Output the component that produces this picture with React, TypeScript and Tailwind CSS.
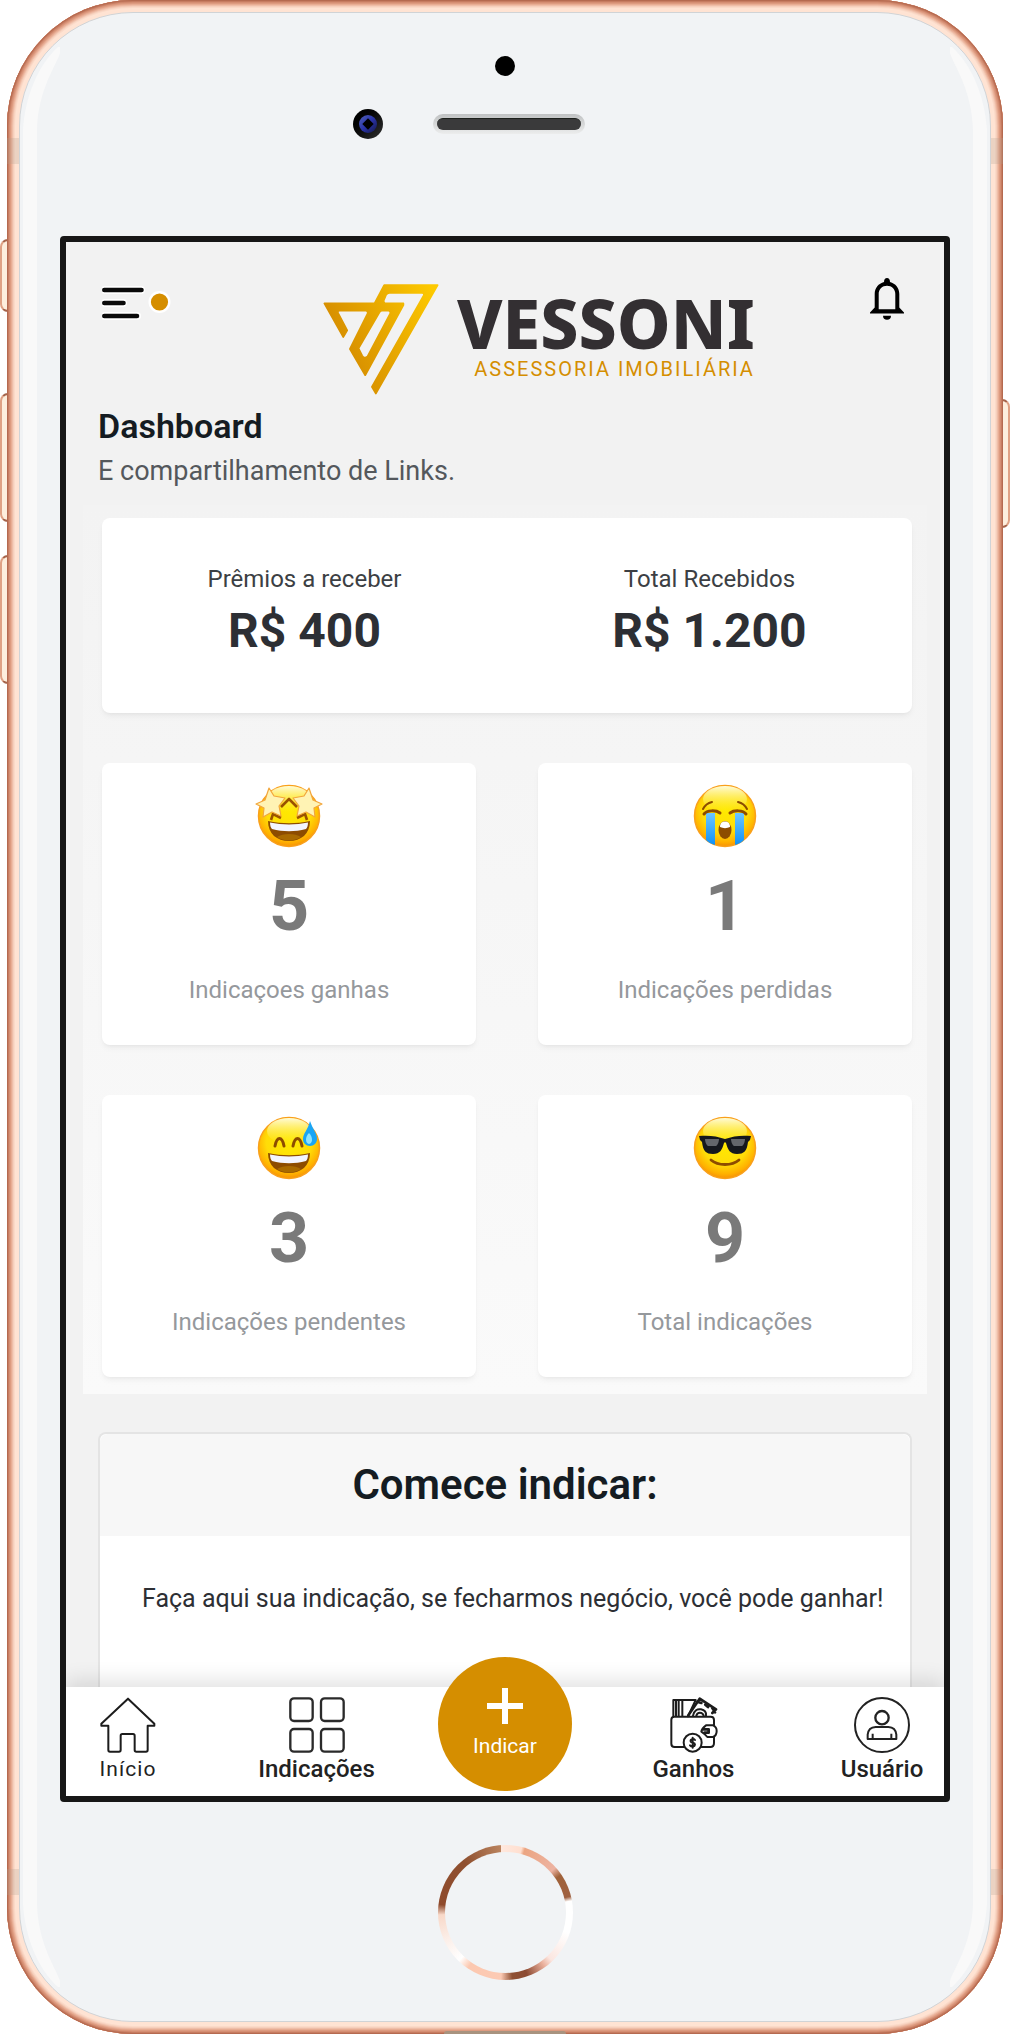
import React from "react";

const GlassEdge = () => (
  <>
    <svg className="block w-[38px] h-[83px]" viewBox="0 0 38 83">
      <path d="M37 0 L37 6 C34 17 15 42 14 83 L0 83 C2 50 15 18 35 0 Z" fill="#f9f9f9" />
    </svg>
    <div className="flex-1 w-[14px] bg-[#f9f9f9]" />
    <svg className="block w-[38px] h-[83px] -scale-y-100" viewBox="0 0 38 83">
      <path d="M37 0 L37 6 C34 17 15 42 14 83 L0 83 C2 50 15 18 35 0 Z" fill="#f9f9f9" />
    </svg>
  </>
);

const MenuIcon = () => (
  <svg className="block w-[72px] h-[34px]" viewBox="0 0 72 34">
    <g stroke="#fff" strokeWidth="8" strokeLinecap="round">
      <path d="M3 4H39M3 17H21M3 30H35" />
    </g>
    <g stroke="#0a0a0a" strokeWidth="4.6" strokeLinecap="round">
      <path d="M2.300 4H39.500M2.300 17H21.500M2.300 30H35" />
    </g>
    <circle cx="57.500" cy="16" r="11" fill="#fff" />
    <circle cx="57.500" cy="16" r="8.600" fill="#d58e00" />
  </svg>
);

const BellIcon = () => (
  <svg className="block w-[34px] h-[42px]" viewBox="0 0 34 42">
    <path
      d="M17 0C18.800 0 20 1.600 20 4C25.500 5.500 29.300 10 29.300 16V29.500L34 34.500V35.500H0V34.500L4.700 29.500V16C4.700 10 8.500 5.500 14 4C14 1.600 15.200 0 17 0Z M17 7.800C12.300 7.800 8.700 11.300 8.700 16V31.200H25.300V16C25.300 11.300 21.700 7.800 17 7.800Z"
      fill="#000"
      fillRule="evenodd"
    />
    <path d="M13 37.800H21C21 40.200 19.500 41.800 17 41.800C14.500 41.800 13 40.200 13 37.800Z" fill="#000" />
  </svg>
);

const LogoMark = () => (
  <svg className="block shrink-0 w-[116px] h-[111px]" viewBox="788 161 349 333">
    <defs>
      <linearGradient id="gold" gradientUnits="userSpaceOnUse" x1="800" y1="330" x2="1120" y2="180">
        <stop offset="0" stopColor="#d38900" />
        <stop offset="1" stopColor="#fdc900" />
      </linearGradient>
    </defs>
    <g fill="url(#gold)" stroke="url(#gold)" strokeWidth="5" strokeLinejoin="round" fillRule="evenodd">
      <path d="M792 219H943L972 164H1133L947 490L935 470L1091 195Q1093 187 1086 187H988Q981 187 978 193L970 212L974 219H1030V224L915 435L869 356L922 250Q924 241 917 241H838Q830 241 834 249L861 300L849 320Z M958 246L895 354L906 376Q913 387 922 378L990 250Q992 241 985 241H966Q961 241 958 246Z" />
    </g>
  </svg>
);

const FaceBase = ({ id }: { id: string }) => (
  <>
    <defs>
      <radialGradient id={id} cx="0.5" cy="0.4" r="0.62">
        <stop offset="0" stopColor="#ffea00" />
        <stop offset="0.6" stopColor="#ffdc08" />
        <stop offset="0.85" stopColor="#ffb000" />
        <stop offset="1" stopColor="#f48a08" />
      </radialGradient>
      <linearGradient id={id + "-shine"} x1="0" y1="0" x2="0" y2="1">
        <stop offset="0" stopColor="#fffbd8" />
        <stop offset="1" stopColor="#fff04a" stopOpacity="0" />
      </linearGradient>
    </defs>
    <circle cx="34" cy="32" r="30.500" fill={"url(#" + id + ")"} stroke="#f9a01c" strokeWidth="1.500" />
    <ellipse cx="34" cy="15" rx="22" ry="13" fill={"url(#" + id + "-shine)"} />
  </>
);

const Grin = () => (
  <>
    <path d="M13 37C27 40 41 40 55 37C55 50 46 57 34 57C22 57 13 50 13 37Z" fill="#8d4c00" />
    <path d="M15 38.500C27 41 41 41 53 38.500C53 42 52 44 51 45C40 48 28 48 17 45C16 44 15 42 15 38.500Z" fill="#f3f5ff" />
    <path d="M22 53C28 49 40 49 46 53C40 57.500 28 57.500 22 53Z" fill="#a96a00" />
  </>
);

const StarStruck = () => (
  <svg className="block w-[68px] h-[64px]" viewBox="0 0 68 64">
    <FaceBase id="face-star" />
    <g stroke="#9a5200" strokeWidth="2.600" strokeLinejoin="round" fill="none">
      <path d="M26 23L34 15L42 23M16 36L18 30L26 34M52 36L50 30L42 34" />
    </g>
    <g fill="#fff3b4" stroke="#f2a63c" strokeWidth="1.200" strokeLinejoin="round">
      <path d="M14 4L19 12L30 14L24 22L26 32L17 28L8 33L9 24L1 20L10 16Z" />
      <path d="M54 4L49 12L38 14L44 22L42 32L51 28L60 33L59 24L67 20L58 16Z" />
    </g>
    <Grin />
  </svg>
);

const Crying = () => (
  <svg className="block w-[68px] h-[64px]" viewBox="0 0 68 64">
    <FaceBase id="face-cry" />
    <defs>
      <linearGradient id="tears" x1="0" y1="0" x2="0" y2="1">
        <stop offset="0" stopColor="#6cc6ff" />
        <stop offset="1" stopColor="#1090f5" />
      </linearGradient>
    </defs>
    <path d="M15 29H24V61C20 60 17 58 15 56Z M44 29H53V56C51 58 48 60 44 61Z" fill="url(#tears)" />
    <g stroke="#8d4c00" strokeWidth="3" strokeLinecap="round" fill="none">
      <path d="M13 30C16 26 25 26 29 29M55 30C52 26 43 26 39 29" />
      <path d="M12 25C14 21 17 19 21 18M56 25C54 21 51 19 47 18" strokeWidth="2" />
    </g>
    <ellipse cx="34" cy="46" rx="6.500" ry="9" fill="#8d4c00" />
    <path d="M29 43C29 39 31 37.500 34 37.500C37 37.500 39 39 39 43C36 44.500 32 44.500 29 43Z" fill="#fff" />
  </svg>
);

const SweatSmile = () => (
  <svg className="block w-[68px] h-[64px]" viewBox="0 0 68 64">
    <FaceBase id="face-sweat" />
    <g stroke="#8d4c00" strokeWidth="3" strokeLinecap="round" fill="none">
      <path d="M20 30C22 20 27 20 29 30M38 30C40 20 45 20 47 30" />
    </g>
    <Grin />
    <path d="M55 5C58 14 62 17 62 23C62 27 59 30 55 30C51 30 48 27 48 23C48 17 53 14 55 5Z" fill="#1aa5f5" />
    <path d="M54 17C58 21 58 27 54 28C50 27 50 21 54 17Z" fill="#8ee4ff" />
  </svg>
);

const Cool = () => (
  <svg className="block w-[68px] h-[64px]" viewBox="0 0 68 64">
    <FaceBase id="face-cool" />
    <path d="M8 20C17 19 26 20 34 23C42 20 51 19 60 20L59 24L57 26C56 35 53 38 46 38C39 38 37 34 35 27C34.500 26 33.500 26 33 27C31 34 29 38 22 38C15 38 12 35 11 26L9 24Z" fill="#15181e" />
    <path d="M14 23H28C28 25 27 29 25 30H17C15 29 14 25 14 23Z M40 23H54C54 25 53 29 51 30H43C41 29 40 25 40 23Z" fill="#63666b" />
    <path d="M20 44C27 50 41 50 48 44" stroke="#8d4c00" strokeWidth="2.800" strokeLinecap="round" fill="none" />
  </svg>
);

const HomeIcon = () => (
  <svg className="block w-[56px] h-[56px]" viewBox="119 172 168 168" fill="none" stroke="#1c1c1c" strokeWidth="6" strokeLinejoin="round">
    <path d="M203 177L282 252V258H262V331Q262 336 257 336H228Q223 336 223 331V288Q223 283 218 283H186Q181 283 181 288V331Q181 336 176 336H149Q144 336 144 331V258H123V252Z" />
  </svg>
);

const GridIcon = () => (
  <svg className="block w-[56px] h-[56px]" viewBox="684 173 168 168" fill="none" stroke="#2a2a2a" strokeWidth="7">
    <rect x="688" y="177" width="67" height="68" rx="11" />
    <rect x="780" y="177" width="68" height="68" rx="11" />
    <rect x="688" y="269" width="67" height="68" rx="11" />
    <rect x="780" y="269" width="68" height="68" rx="11" />
  </svg>
);

const WalletIcon = () => (
  <svg className="block w-[56px] h-[56px]" viewBox="486 173 168 168" fill="none" stroke="#1c1c1c" strokeWidth="6" strokeLinejoin="round" strokeLinecap="round">
    <path d="M508 231V182H575L552 231M516 183V230M524 183V230M535 183V230" />
    <path d="M553 228L587 178L636 210L625 221M580 187L592 191M604 196L612 203M625 206L633 219" strokeWidth="8" />
    <path d="M567 229C570 214 580 208 591 210C602 212 607 220 606 229M577 229C580 218 595 217 599 229" />
    <path d="M540 323H512Q502 323 502 313V241Q502 232 511 232H620Q630 232 630 242V258M630 294V311Q630 323 619 323H593" />
    <path d="M606 258H627Q638 262 638 275Q638 289 627 293H610Q603 284 592 277Q593 267 606 258Z" />
    <path d="M598 270H614V280H602" strokeWidth="8" />
    <circle cx="566" cy="310" r="27" />
    <path d="M573 302C569 297 558 299 560 306C562 312 573 309 573 316C572 323 562 323 558 318M566 295V325" />
  </svg>
);

const UserIcon = () => (
  <svg className="block w-[56px] h-[56px]" viewBox="1062 173 168 168" fill="none" stroke="#222" strokeWidth="6">
    <circle cx="1146" cy="257" r="81" />
    <circle cx="1146" cy="235" r="20" strokeWidth="7" />
    <path d="M1103 299V286Q1105 264 1127 263H1165Q1187 264 1189 286V299ZM1118 299V283M1174 299V283" strokeLinejoin="round" />
  </svg>
);

const stats = [
  { icon: <StarStruck />, value: 5, label: "Indicaçoes ganhas" },
  { icon: <Crying />, value: 1, label: "Indicações perdidas" },
  { icon: <SweatSmile />, value: 3, label: "Indicações pendentes" },
  { icon: <Cool />, value: 9, label: "Total indicações" },
];

const Header = () => (
  <header className="flex items-start pt-9 pl-9 pr-10">
    <button type="button" aria-label="Menu" className="mt-2">
      <MenuIcon />
    </button>
    <div className="flex gap-[18px] ml-[149px] mt-1.5">
      <LogoMark />
      <div className="pt-[15px] text-right">
        <p className="font-['Noto_Sans',sans-serif] font-extrabold text-[68px] leading-[48px] text-[#332f32]">
          VESSONI
        </p>
        <p className="mt-[10px] text-[20px] leading-6 tracking-widest whitespace-nowrap text-[#d58e00]">
          ASSESSORIA IMOBILIÁRIA
        </p>
      </div>
    </div>
    <button type="button" aria-label="Notificações" className="ml-auto">
      <BellIcon />
    </button>
  </header>
);

const Totals = () => (
  <section className="grid grid-cols-2 bg-white rounded-lg shadow-md shadow-black/5 text-center pt-[43px] pb-12">
    <div>
      <p className="text-[24px] leading-9 text-[#3c3f44]">Prêmios a receber</p>
      <p className="text-[48px] leading-[68px] font-bold text-[#2d2f34]">R$ 400</p>
    </div>
    <div>
      <p className="text-[24px] leading-9 text-[#3c3f44]">Total Recebidos</p>
      <p className="text-[48px] leading-[68px] font-bold text-[#2d2f34]">R$ 1.200</p>
    </div>
  </section>
);

const NavItem = ({ icon, label, strong }: { icon: React.ReactNode; label: string; strong?: boolean }) => (
  <a href="#" className="flex flex-col items-center w-[114px] pt-[10px] text-[#222]">
    {icon}
    <span className={strong ? "text-[24px] leading-8 font-medium" : "text-[21px] leading-8 tracking-wider"}>{label}</span>
  </a>
);

const BottomNav = () => (
  <nav className="relative flex justify-between bg-white px-[5px] pb-[11px] shadow-[0_-6px_20px_rgba(0,0,0,0.12)]">
    <NavItem icon={<HomeIcon />} label="Início" />
    <NavItem icon={<GridIcon />} label="Indicações" strong />
    <button
      type="button"
      className="flex flex-col items-center w-[134px] h-[134px] -mt-[30px] -mx-[10px] -mb-[11px] pt-[31px] rounded-full bg-[#d58e00] text-white"
    >
      <svg className="block w-[36px] h-[36px]" viewBox="0 0 36 36">
        <path d="M18 0V36M0 18H36" stroke="#fff" strokeWidth="6" />
      </svg>
      <span className="mt-[6px] text-[21px] leading-8">Indicar</span>
    </button>
    <NavItem icon={<WalletIcon />} label="Ganhos" strong />
    <NavItem icon={<UserIcon />} label="Usuário" strong />
  </nav>
);

const Screen = () => (
  <main className="mx-10 border-[6px] border-[#171717] rounded-[4px] bg-[#f2f2f2] overflow-hidden">
    <Header />
    <h1 className="mt-[11px] pl-8 text-[34px] leading-10 font-semibold text-[#151c22]">Dashboard</h1>
    <p className="mt-[7px] pl-8 text-[27px] leading-9 text-[#54585c]">E compartilhamento de Links.</p>

    <div className="mt-4 mx-[17px] pt-[13px] pb-[17px] pl-[19px] pr-[15px] bg-gradient-to-b from-[#f3f3f3] to-[#fafafa]">
      <Totals />
      <section className="grid grid-cols-2 gap-x-[62px] gap-y-[50px] mt-[50px]">
        {stats.map((s) => (
          <div
            key={s.label}
            className="flex flex-col items-center pt-[21px] pb-[37px] bg-white rounded-lg shadow-md shadow-black/5"
          >
            {s.icon}
            <p className="mt-[22px] text-[70px] leading-[72px] font-bold text-[#7a7a7a]">{s.value}</p>
            <p className="mt-[30px] text-[24px] leading-9 text-[#95989c]">{s.label}</p>
          </div>
        ))}
      </section>
    </div>

    <section className="mt-[38px] mx-8 border-2 border-b-0 border-[#e4e4e4] rounded-t-lg bg-white">
      <h2 className="py-[26px] rounded-t-lg bg-[#f7f7f7] text-center text-[42px] leading-[50px] font-semibold text-[#151c22]">
        Comece indicar:
      </h2>
      <p className="pt-[45px] pb-[70px] pl-[42px] text-[25px] leading-9 whitespace-nowrap text-[#2d2f34]">
        Faça aqui sua indicação, se fecharmos negócio, você pode ganhar!
      </p>
    </section>
    <BottomNav />
  </main>
);

export default function App() {
  return (
    <div className="relative bg-white px-[7px] overflow-hidden font-[Roboto,sans-serif]">
      {/* volume and power keys */}
      <div className="absolute left-0 top-[239px] w-4 h-[73px] rounded-l-[8px] border-2 border-l-[#dfa184] border-y-[#a5644b] bg-[#fdeedd]" />
      <div className="absolute left-0 top-[393px] w-4 h-[129px] rounded-l-[8px] border-2 border-l-[#dfa184] border-y-[#a5644b] bg-[#fdeedd]" />
      <div className="absolute left-0 top-[555px] w-4 h-[129px] rounded-l-[8px] border-2 border-l-[#dfa184] border-y-[#a5644b] bg-[#fdeedd]" />
      <div className="absolute right-0 top-[399px] w-4 h-[129px] rounded-r-[8px] border-2 border-r-[#dfa184] border-y-[#a5644b] bg-[#fdeedd]" />

      <div className="relative p-3 rounded-[126px] overflow-hidden bg-[#ffe3d3] shadow-[inset_0_0_0_1px_#b56a50,inset_0_0_0_2px_#c67c61,inset_0_0_0_3px_#d58e73,inset_0_0_0_4px_#dd9b80,inset_0_0_0_5px_#e8ad94,inset_0_0_0_6px_#efbea8,inset_0_0_0_7px_#f6cfbc,inset_0_0_0_8px_#fbdac8]">
        {/* antenna lines */}
        <div className="absolute inset-x-0 top-[138px] h-[26px] bg-[#b0a090]/25" />
        <div className="absolute inset-x-0 bottom-[139px] h-[26px] bg-[#b0a090]/25" />
        <div className="absolute left-1/2 -translate-x-1/2 bottom-0 w-[122px] h-[3px] rounded-t-sm bg-[#a8937f]" />

        <div className="relative rounded-[114px] border border-[#d0d3d6] bg-[#f1f3f5]">
          <div className="absolute left-[3px] top-[34px] bottom-[34px] flex flex-col">
            <GlassEdge />
          </div>
          <div className="absolute right-[3px] top-[34px] bottom-[34px] flex flex-col -scale-x-100">
            <GlassEdge />
          </div>

          <div className="flex flex-col items-center pt-[43px] pb-[97px]">
            <div className="w-5 h-5 rounded-full bg-black" />
            <div className="flex items-center gap-[50px] mt-[33px] mr-[72px]">
              <div className="flex items-center justify-center w-[30px] h-[30px] rounded-full bg-gradient-to-br from-black to-[#333]">
                <div className="flex items-center justify-center w-[18px] h-[18px] rounded-full bg-gradient-to-br from-[#5560b8] via-[#2a33a8] to-[#14184a]">
                  <div className="w-2 h-2 rotate-45 bg-black" />
                </div>
              </div>
              <div className="w-[152px] p-1 rounded-full bg-gradient-to-b from-[#c0c2c3] to-[#eceded]">
                <div className="h-3 rounded-full bg-[#3a3a3b] border-t border-[#1c201c]" />
              </div>
            </div>
          </div>

          <Screen />

          <div className="flex justify-center pt-[43px] pb-[41px]">
            <button
              type="button"
              aria-label="Home"
              className="p-[7px] rounded-full bg-[conic-gradient(from_-4deg,#ffe8de_0deg,#ffdfd0_18deg,#eba582_21deg,#edb3a2_52deg,#a0623a_60deg,#9f6040_80deg,#ffffff_84deg,#ffffff_112deg,#fbe6e0_140deg,#eab09c_148deg,#8c4a32_165deg,#8f5033_178deg,#fccab4_188deg,#fcc8b0_218deg,#ffffff_228deg,#fbeee8_250deg,#f8d8c8_272deg,#8f4a2c_281deg,#8f5030_325deg,#ba835e_360deg)]"
            >
              <span className="block w-[121px] h-[121px] rounded-full bg-[#f1f3f5]" />
            </button>
          </div>
        </div>
      </div>
    </div>
  );
}
